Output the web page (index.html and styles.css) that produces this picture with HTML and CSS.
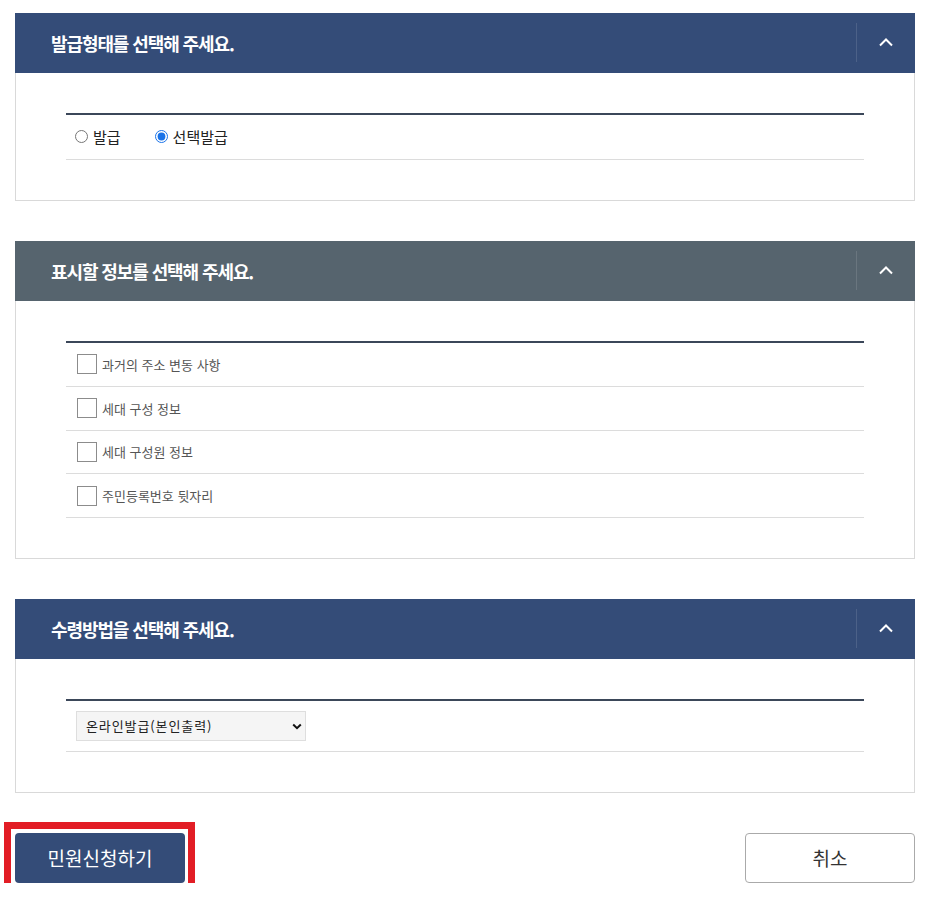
FILE: index.html
```html
<!DOCTYPE html>
<html lang="ko">
<head>
<meta charset="utf-8">
<title>민원신청</title>
<link rel="stylesheet" href="styles.css">
</head>
<body>
<div class="page">
  <section class="panel">
    <div class="panel-head navy">
      <h2 class="panel-title">발급형태를 선택해 주세요.</h2>
      <button class="toggle" type="button" aria-label="접기">
        <svg width="16" height="10" viewBox="0 0 16 10"><polyline points="2,8.5 8,2.5 14,8.5" fill="none" stroke="#fff" stroke-width="2"/></svg>
      </button>
    </div>
    <div class="panel-body">
      <div class="rows">
        <div class="row radio-row">
          <label class="radio"><input type="radio" name="type"> 발급</label>
          <label class="radio"><input type="radio" name="type" checked> 선택발급</label>
        </div>
      </div>
    </div>
  </section>

  <section class="panel">
    <div class="panel-head gray">
      <h2 class="panel-title">표시할 정보를 선택해 주세요.</h2>
      <button class="toggle" type="button" aria-label="접기">
        <svg width="16" height="10" viewBox="0 0 16 10"><polyline points="2,8.5 8,2.5 14,8.5" fill="none" stroke="#fff" stroke-width="2"/></svg>
      </button>
    </div>
    <div class="panel-body">
      <div class="rows">
        <label class="row check-row"><input type="checkbox" class="check"><span>과거의 주소 변동 사항</span></label>
        <label class="row check-row"><input type="checkbox" class="check"><span>세대 구성 정보</span></label>
        <label class="row check-row"><input type="checkbox" class="check"><span>세대 구성원 정보</span></label>
        <label class="row check-row"><input type="checkbox" class="check"><span>주민등록번호 뒷자리</span></label>
      </div>
    </div>
  </section>

  <section class="panel">
    <div class="panel-head navy">
      <h2 class="panel-title">수령방법을 선택해 주세요.</h2>
      <button class="toggle" type="button" aria-label="접기">
        <svg width="16" height="10" viewBox="0 0 16 10"><polyline points="2,8.5 8,2.5 14,8.5" fill="none" stroke="#fff" stroke-width="2"/></svg>
      </button>
    </div>
    <div class="panel-body">
      <div class="rows">
        <div class="row select-row">
          <span class="select-wrap">
            <select class="select">
              <option>온라인발급(본인출력)</option>
            </select>
            <svg class="select-arrow" width="10" height="7" viewBox="0 0 10 7"><polyline points="1.2,1.5 5,5.2 8.8,1.5" fill="none" stroke="#111" stroke-width="2"/></svg>
          </span>
        </div>
      </div>
    </div>
  </section>

  <div class="actions">
    <span class="highlight">
      <button class="btn primary" type="button">민원신청하기</button>
    </span>
    <button class="btn secondary" type="button">취소</button>
  </div>
</div>
</body>
</html>
```

FILE: styles.css
```css
* { box-sizing: border-box; }

html, body {
  margin: 0;
  padding: 0;
  background: #fff;
}

body {
  font-family: "Noto Sans CJK KR", "Noto Sans", sans-serif;
  color: #333;
}

.page {
  width: 900px;
  margin: 13px 0 0 15px;
  display: flex;
  flex-direction: column;
  gap: 40px;
}

.panel-head {
  height: 60px;
  display: flex;
  align-items: center;
  justify-content: space-between;
  padding-left: 36px;
}

.panel-head.navy { background: #344c78; }
.panel-head.gray { background: #56646e; }

.panel-title {
  margin: 0;
  color: #fff;
  font-size: 18px;
  font-weight: 700;
  letter-spacing: -1.1px;
  line-height: 24px;
}

.toggle {
  width: 59px;
  height: 39px;
  margin-bottom: 1px;
  border: 0;
  border-left: 1px solid rgba(255, 255, 255, 0.12);
  background: transparent;
  display: flex;
  align-items: center;
  justify-content: center;
  padding: 0 0 2px 0;
  cursor: pointer;
}

.panel-body {
  border: 1px solid #d9d9d9;
  border-top: 0;
  padding: 40px 50px;
}

.rows {
  border-top: 2px solid #3b4759;
}

.row {
  display: flex;
  align-items: center;
  border-bottom: 1px solid #dcdcdc;
}

.radio-row {
  height: 45px;
  padding-left: 9px;
  gap: 34px;
  padding-bottom: 1px;
}

.radio {
  display: flex;
  align-items: center;
  gap: 3px;
  font-size: 15px;
  color: #222;
  letter-spacing: 0;
}

.radio input {
  width: 13px;
  height: 13px;
  margin: 0 2px 0 0;
  accent-color: #1a73e8;
}

.check-row {
  height: 43.75px;
  padding-left: 11px;
  gap: 5px;
  font-size: 13px;
  color: #555;
  letter-spacing: 0;
}

.check {
  appearance: none;
  -webkit-appearance: none;
  width: 20px;
  height: 20px;
  margin: 0;
  border: 1px solid #8c8c8c;
  background: #fff;
  border-radius: 0;
}

.select-row {
  height: 51px;
  padding-left: 10px;
  padding-bottom: 1px;
}

.select-wrap {
  position: relative;
  display: inline-block;
}

.select {
  appearance: none;
  -webkit-appearance: none;
  width: 230px;
  height: 30px;
  border: 1px solid #dedede;
  background: #f5f5f5;
  color: #222;
  font-family: "Noto Sans CJK KR", "Noto Sans", sans-serif;
  font-size: 13px;
  letter-spacing: 0.9px;
  padding: 0 0 0 9px;
  border-radius: 0;
}

.select-arrow {
  position: absolute;
  right: 4px;
  top: 12px;
  pointer-events: none;
}

.actions {
  display: flex;
  justify-content: space-between;
  align-items: center;
}

.highlight {
  position: relative;
  display: inline-block;
}

.highlight::after {
  content: "";
  position: absolute;
  left: -11px;
  top: -11px;
  right: -10px;
  bottom: -14px;
  border: 7px solid #e21d25;
  pointer-events: none;
}

.btn {
  width: 170px;
  height: 50px;
  border-radius: 4px;
  font-family: "Noto Sans CJK KR", "Noto Sans", sans-serif;
  font-size: 19px;
  letter-spacing: 0;
  cursor: pointer;
  display: block;
}

.btn.primary {
  background: #344c78;
  color: #fff;
  border: 0;
  padding-bottom: 2px;
}

.btn.secondary {
  background: #fff;
  color: #333;
  border: 1px solid #aaa;
  padding-bottom: 2px;
}
```
